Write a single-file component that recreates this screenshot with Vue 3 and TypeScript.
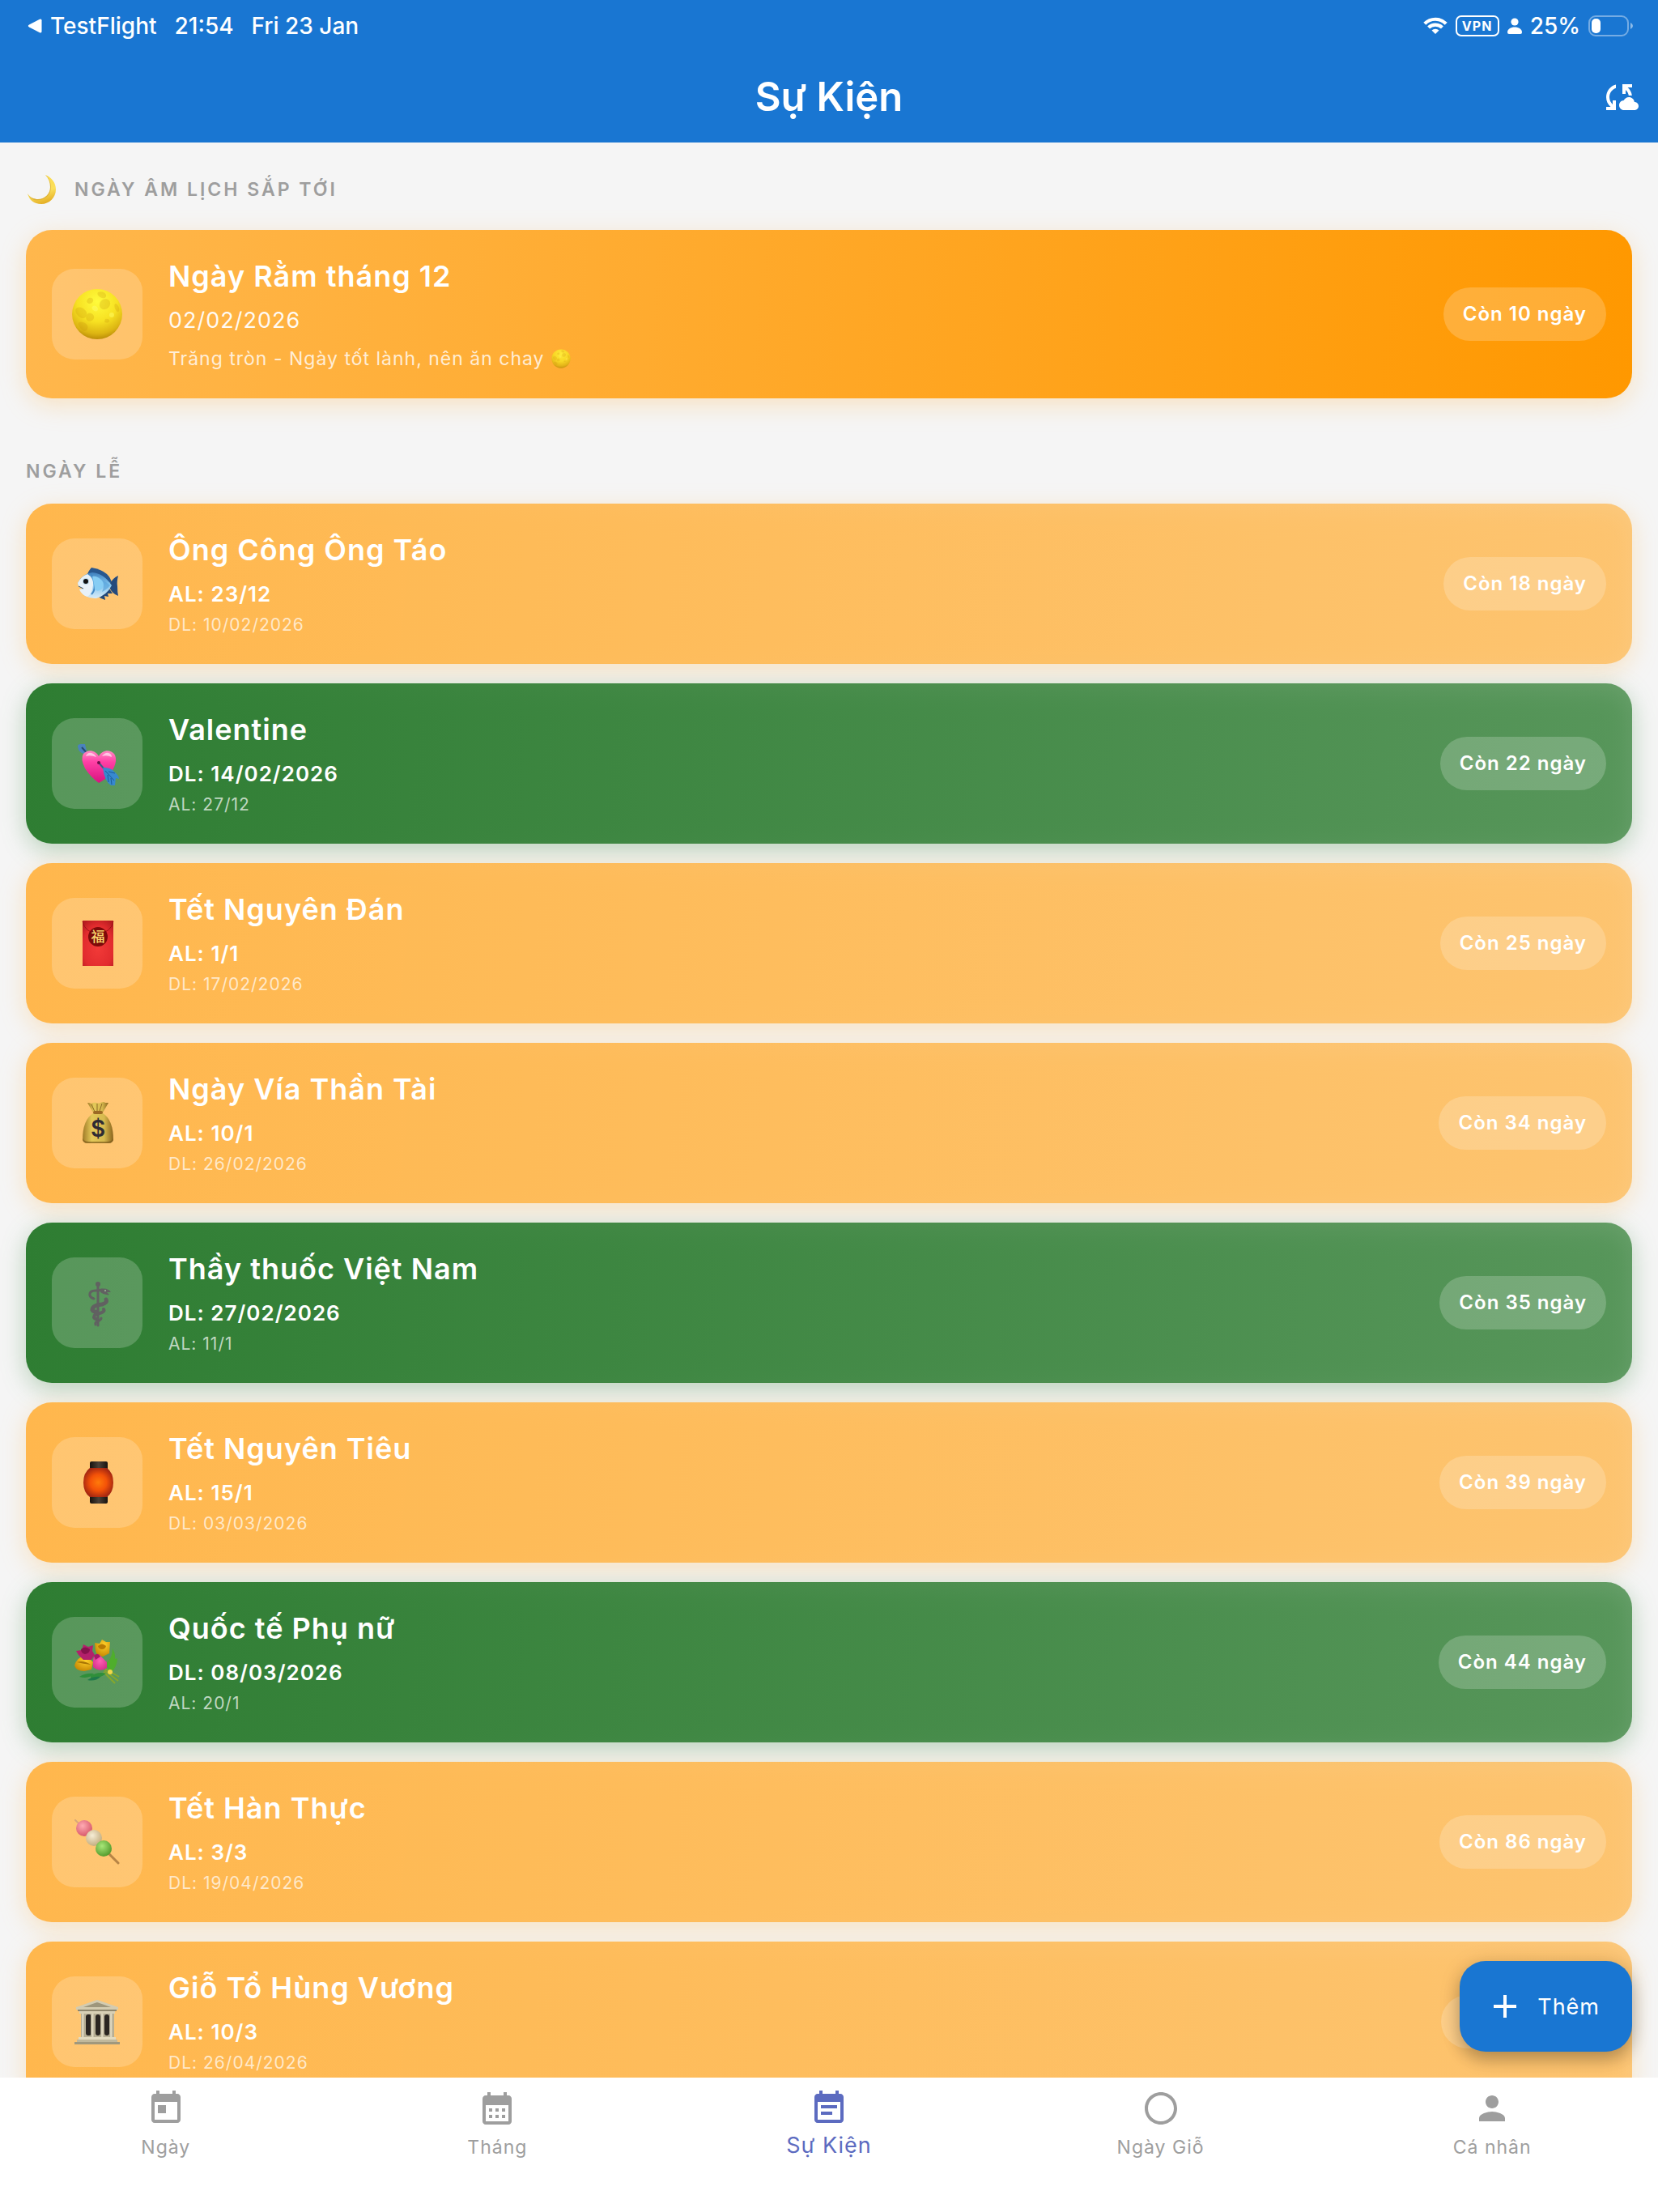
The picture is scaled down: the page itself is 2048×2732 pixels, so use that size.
<script setup lang="ts">
type Tone = 'lunar' | 'solar'

interface Holiday {
  icon: string
  name: string
  primary: string
  secondary: string
  countdown?: string
  tone: Tone
}

interface Tab {
  label: string
  path: string
  active?: boolean
}

const holidays: Holiday[] = [
  { icon: 'fish', name: 'Ông Công Ông Táo', primary: 'AL: 23/12', secondary: 'DL: 10/02/2026', countdown: 'Còn 18 ngày', tone: 'lunar' },
  { icon: 'heart', name: 'Valentine', primary: 'DL: 14/02/2026', secondary: 'AL: 27/12', countdown: 'Còn 22 ngày', tone: 'solar' },
  { icon: 'envelope', name: 'Tết Nguyên Đán', primary: 'AL: 1/1', secondary: 'DL: 17/02/2026', countdown: 'Còn 25 ngày', tone: 'lunar' },
  { icon: 'money', name: 'Ngày Vía Thần Tài', primary: 'AL: 10/1', secondary: 'DL: 26/02/2026', countdown: 'Còn 34 ngày', tone: 'lunar' },
  { icon: 'medical', name: 'Thầy thuốc Việt Nam', primary: 'DL: 27/02/2026', secondary: 'AL: 11/1', countdown: 'Còn 35 ngày', tone: 'solar' },
  { icon: 'lantern', name: 'Tết Nguyên Tiêu', primary: 'AL: 15/1', secondary: 'DL: 03/03/2026', countdown: 'Còn 39 ngày', tone: 'lunar' },
  { icon: 'bouquet', name: 'Quốc tế Phụ nữ', primary: 'DL: 08/03/2026', secondary: 'AL: 20/1', countdown: 'Còn 44 ngày', tone: 'solar' },
  { icon: 'dango', name: 'Tết Hàn Thực', primary: 'AL: 3/3', secondary: 'DL: 19/04/2026', countdown: 'Còn 86 ngày', tone: 'lunar' },
  { icon: 'temple', name: 'Giỗ Tổ Hùng Vương', primary: 'AL: 10/3', secondary: 'DL: 26/04/2026', tone: 'lunar' },
]

const tabs: Tab[] = [
  {
    label: 'Ngày',
    path: 'M19 3h-1V1h-2v2H8V1H6v2H5c-1.11 0-1.99.9-1.99 2L3 19c0 1.1.89 2 2 2h14c1.1 0 2-.9 2-2V5c0-1.1-.9-2-2-2zm0 16H5V8h14v11zM7 10h5v5H7z',
  },
  {
    label: 'Tháng',
    path: 'M19 4h-1V2h-2v2H8V2H6v2H5c-1.11 0-1.99.9-1.99 2L3 20c0 1.1.89 2 2 2h14c1.1 0 2-.9 2-2V6c0-1.1-.9-2-2-2zm0 16H5V10h14v10zM9 14H7v-2h2v2zm4 0h-2v-2h2v2zm4 0h-2v-2h2v2zm-8 4H7v-2h2v2zm4 0h-2v-2h2v2zm4 0h-2v-2h2v2z',
  },
  {
    label: 'Sự Kiện',
    path: 'M17 10H7v2h10v-2zm2-7h-1V1h-2v2H8V1H6v2H5c-1.11 0-1.99.9-1.99 2L3 19c0 1.1.89 2 2 2h14c1.1 0 2-.9 2-2V5c0-1.1-.9-2-2-2zm0 16H5V8h14v11zm-5-5H7v2h7v-2z',
    active: true,
  },
  {
    label: 'Ngày Giỗ',
    path: 'M12 2C6.47 2 2 6.47 2 12s4.47 10 10 10 10-4.47 10-10S17.53 2 12 2zm0 18c-4.42 0-8-3.58-8-8s3.58-8 8-8 8 3.58 8 8-3.58 8-8 8z',
  },
  {
    label: 'Cá nhân',
    path: 'M12 12c2.21 0 4-1.79 4-4s-1.79-4-4-4-4 1.79-4 4 1.79 4 4 4zm0 2c-2.67 0-8 1.34-8 4v2h16v-2c0-2.66-5.33-4-8-4z',
  },
]
</script>

<template>
  <div class="app">
    <!-- Shared paints and the moon disc used in two places -->
    <svg class="defs" aria-hidden="true">
      <defs>
        <radialGradient id="moonFill" cx="0.5" cy="0.25" r="0.8">
          <stop offset="0" stop-color="#fffb3c" />
          <stop offset="0.5" stop-color="#f7e122" />
          <stop offset="0.8" stop-color="#dcb412" />
          <stop offset="1" stop-color="#ad7c04" />
        </radialGradient>
        <symbol id="moon" viewBox="0 0 64 64">
          <circle cx="32" cy="32" r="31" fill="url(#moonFill)" />
          <g fill="#c48f0a" opacity="0.24">
            <path d="M33 5c4-2 9 0 10 3s-2 5-5 4-7-4-5-7z" />
            <path d="M39 14c5-2 10 1 9 6s-7 8-11 5-2-9 2-11z" />
            <path d="M6 25c4-3 9-1 12 3s1 9-4 9-11-8-8-12z" />
            <path d="M21 31c4-1 8 2 7 6s-7 5-9 2 0-7 2-8z" />
            <path d="M55 19c3 1 5 6 4 9s-4 0-5-3-1-6 1-6z" />
            <path d="M10 42c6-1 12 3 10 8s-6 3-9-1-3-6-1-7z" />
            <path d="M22 12c3-1 6 1 5 4s-5 4-7 2 0-5 2-6z" />
            <path d="M42 38c3-1 6 1 5 3s-5 2-6 0z" />
          </g>
          <g fill="#fffc66" opacity="0.5">
            <path d="M27 22c3-1 6 1 6 4s-4 3-6 1-2-4 0-5z" />
            <circle cx="50" cy="33" r="3" />
          </g>
        </symbol>
      </defs>
    </svg>

    <header class="top">
      <div class="status">
        <div class="status-left">
          <svg class="back" viewBox="0 0 18 18" aria-hidden="true"><path d="M2 7.500 15 .8q2.500-1 2.500 1.400v13.600q0 2.400-2.500 1.400L2 10.500q-2.500-1.500 0-3z" fill="#fff" /></svg>
          <span class="origin">TestFlight</span>
          <span class="clock">21:54</span>
          <span>Fri 23 Jan</span>
        </div>
        <div class="status-right">
          <svg class="wifi" viewBox="0 0 30 22" aria-hidden="true">
            <path d="M1.800 8.300a18.500 18.500 0 0 1 26.400 0M6.600 13a12 12 0 0 1 16.800 0" fill="none" stroke="#fff" stroke-width="4.200" />
            <path d="m15 21-4.500-4.400a6.500 6.500 0 0 1 9 0z" fill="#fff" />
          </svg>
          <span class="vpn">VPN</span>
          <svg class="who" viewBox="0 0 18 20" aria-hidden="true"><circle cx="9" cy="5" r="4.600" fill="#fff" /><path d="M0 18c0-4 4-6.500 9-6.500s9 2.500 9 6.500q0 2-2 2H2q-2 0-2-2z" fill="#fff" /></svg>
          <span>25%</span>
          <svg class="battery" viewBox="0 0 56 26" aria-hidden="true">
            <rect x="1" y="1" width="48" height="24" rx="8" fill="none" stroke="#fff" stroke-opacity="0.4" stroke-width="2" />
            <rect x="4" y="4" width="11" height="18" rx="5" fill="#fff" />
            <path d="M52 9q3 1.500 3 4t-3 4z" fill="#fff" fill-opacity="0.5" />
          </svg>
        </div>
      </div>
      <div class="bar">
        <h1>Sự Kiện</h1>
        <button class="sync" type="button" aria-label="Đồng bộ">
          <svg viewBox="0 0 24 24" aria-hidden="true"><path fill="#fff" d="M21.500 14.980c-.02 0-.03 0-.05.01C21.200 13.300 19.760 12 18 12c-1.400 0-2.600.83-3.160 2.020C13.260 14.100 12 15.400 12 17c0 1.660 1.340 3 3 3l6.500-.02c1.380 0 2.500-1.120 2.500-2.500s-1.120-2.500-2.500-2.500zM10 4.260v2.090C7.670 7.180 6 9.390 6 12c0 1.770.78 3.340 2 4.440V14h2v6H4v-2h2.730C5.060 16.540 4 14.400 4 12c0-3.730 2.550-6.850 6-7.740zM20 6h-2.730c1.430 1.260 2.410 3.010 2.660 5h-2.020c-.23-1.360-.93-2.550-1.910-3.440V10h-2V4h6v2z" /></svg>
        </button>
      </div>
    </header>

    <div class="body">
      <main class="scroll">
        <section>
          <h2 class="heading first">
            <svg class="crescent" viewBox="0 0 40 40" aria-hidden="true">
              <defs>
                <linearGradient id="crescentFill" x1="0.3" y1="0" x2="0.6" y2="1">
                  <stop offset="0" stop-color="#f9d94a" />
                  <stop offset="0.6" stop-color="#fbdf5a" />
                  <stop offset="1" stop-color="#e3ac22" />
                </linearGradient>
              </defs>
              <path d="M24 2c8 3 13 10 13 18 0 10-8 18-18 18C10 38 4 33 2 25c3 5 8 7 13 7 9 0 15-7 15-15 0-6-2-11-6-15z" fill="url(#crescentFill)" />
              <path d="M24 2c4 4 6 9 6 15 0 8-6 15-15 15-5 0-10-2-13-7 4 8 9 9 14 8 9-1 15-7 15-16 0-6-3-12-7-15z" fill="#c99a2a" opacity="0.5" />
            </svg>
            <span>NGÀY ÂM LỊCH SẮP TỚI</span>
          </h2>
          <article class="card hero">
            <div class="tile"><svg class="full" aria-hidden="true"><use href="#moon" /></svg></div>
            <div class="info">
              <h3>Ngày Rằm tháng 12</h3>
              <p class="date">02/02/2026</p>
              <p class="note">Trăng tròn - Ngày tốt lành, nên ăn chay <svg class="tiny" aria-hidden="true"><use href="#moon" /></svg></p>
            </div>
            <span class="chip">Còn 10 ngày</span>
          </article>
        </section>

        <section class="holidays">
          <h2 class="heading">NGÀY LỄ</h2>
          <ul class="list">
            <li v-for="item in holidays" :key="item.name" class="card" :class="item.tone">
              <div class="tile">
                <svg v-if="item.icon === 'fish'" viewBox="0 0 56 56" aria-hidden="true">
                  <defs>
                    <linearGradient id="fishBody" x1="0" y1="0" x2="0" y2="1"><stop offset="0" stop-color="#3f7fbd" /><stop offset="0.45" stop-color="#7fc3ee" /><stop offset="1" stop-color="#d9ecf7" /></linearGradient>
                  </defs>
                  <path d="M15 19Q17 12 21 8q12 2 19 8 5 5 6 11L36 26z" fill="#28578f" />
                  <path d="M43 29q4-8 11-11-2 8-1 13 0 7 1 12-8-3-11-11z" fill="#264a7c" />
                  <path d="M26 42q6 4 12 6l-1-5 5 1-1-4 6 0-4-6z" fill="#24497a" />
                  <path d="M4 27Q9 16 22 14q14 1 24 16-6 12-19 16-14 1-21-11l5-1-6-3z" fill="url(#fishBody)" />
                  <path d="M4 27q4-8 12-11 8 5 7 14-1 10-7 14-7-2-10-9l5-1-6-3z" fill="#e8f1f7" />
                  <path d="M20 16q5 5 5 14 0 7-4 11" fill="none" stroke="#4389c6" stroke-width="2" />
                  <path d="M22 19q6-1 12 5 4 5 0 10-5 5-9 1-1-9-3-16z" fill="#86cdf4" />
                  <path d="M34 23q6 3 10 7-5 6-10 8 4-8 0-15z" fill="#5aa4dc" opacity="0.7" />
                  <circle cx="14" cy="25" r="4" fill="#b8d6e8" /><circle cx="14" cy="25" r="3" fill="#111" />
                  <path d="M5 31l6 3" stroke="#36516b" stroke-width="1" />
                </svg>

                <svg v-else-if="item.icon === 'heart'" viewBox="0 0 56 56" aria-hidden="true">
                  <defs>
                    <linearGradient id="heartFill" x1="0" y1="0" x2="0" y2="1"><stop offset="0" stop-color="#ff8ac4" /><stop offset="0.35" stop-color="#ff3fa5" /><stop offset="1" stop-color="#d8127f" /></linearGradient>
                  </defs>
                  <path d="M4 7q0-3 4-3h5l2 8-3 4q-7-1-8-9z" fill="#4a83bd" />
                  <path d="m9 8 9 10" stroke="#274b72" stroke-width="2" />
                  <path d="M30 52Q20 45 13 34 7 22 11 16c5-6 15-5 19 3 4-8 14-9 19-3 4 6 2 14-3 22-5 7-10 11-16 14z" fill="url(#heartFill)" />
                  <path d="M14 19q2-5 7-4 4 1 6 5-7-3-13-1zM34 19q4-5 8-4 4 1 4 5-6-3-12-1z" fill="#fff" opacity="0.6" />
                  <path d="m30 27 18 21" stroke="#3a5f88" stroke-width="2" />
                  <path d="M35 33q10 0 14 5 6 5 6 9l-4-1-1 9-5 0q-8-5-10-22z" fill="#3789cf" />
                  <path d="m38 37 11 12m-8-7 1 9m3-5 1 8m-4-16 8 2" stroke="#1b5a97" stroke-width="1" fill="none" />
                  <circle cx="30" cy="27" r="2" fill="#6b0f47" />
                </svg>

                <svg v-else-if="item.icon === 'envelope'" viewBox="0 0 56 56" aria-hidden="true">
                  <defs>
                    <radialGradient id="paper" cx="0.5" cy="0.6" r="0.7"><stop offset="0" stop-color="#f23a38" /><stop offset="0.7" stop-color="#e22c2e" /><stop offset="1" stop-color="#b81c20" /></radialGradient>
                  </defs>
                  <rect x="10" y="0" width="38" height="56" fill="url(#paper)" />
                  <path d="M10 1q3 14 19 15Q45 15 48 1" fill="none" stroke="#9c1418" stroke-width="1" />
                  <circle cx="29" cy="20" r="12" fill="#7d0a0a" />
                  <text x="29" y="26" text-anchor="middle" font-size="17" font-weight="500" font-family="'Noto Sans CJK SC', sans-serif" fill="#f6d46b">福</text>
                </svg>

                <svg v-else-if="item.icon === 'money'" viewBox="0 0 56 56" aria-hidden="true">
                  <defs>
                    <linearGradient id="sack" x1="0" y1="0" x2="1" y2="0"><stop offset="0" stop-color="#a07a28" /><stop offset="0.3" stop-color="#e3c959" /><stop offset="0.7" stop-color="#d6b94e" /><stop offset="1" stop-color="#8a641d" /></linearGradient>
                  </defs>
                  <path d="M16 3q3 0 5 1 3-2 6-1 3 1 5 0 4-2 6 0l4 0-7 12q-6 3-12 0z" fill="url(#sack)" />
                  <path d="m21 5 4 9m3-10v9m6-9-3 9" stroke="#8d6a25" stroke-width="1" />
                  <path d="M23 16h12q13 8 13 33-2 4-6 4H16q-4 0-6-4 0-25 13-33z" fill="url(#sack)" />
                  <path d="M10 47q2 4 8 4h22q6 0 8-4 0 6-6 6H16q-6 0-6-6z" fill="#7f5b1b" opacity="0.7" />
                  <rect x="23" y="13" width="12" height="4" rx="2" fill="#9b6a24" />
                  <text x="29" y="45" text-anchor="middle" font-size="28" font-weight="600" font-family="Inter, sans-serif" fill="#2f2c33">$</text>
                </svg>

                <svg v-else-if="item.icon === 'medical'" viewBox="0 0 56 60" class="tall" aria-hidden="true">
                  <g fill="none" stroke="#616161" stroke-linecap="round">
                    <path d="M29 8v50" stroke-width="3" />
                    <path d="M34 14Q30 15 26 15q-8 0-7 6 1 3 5 4" stroke-width="3" />
                    <path d="M39 26q2 4-5 6-12 1-12 7 1 2 4 2" stroke-width="5" />
                    <path d="M36 38q2 3-5 5-7 1-7 5 1 2 3 2" stroke-width="4" />
                    <path d="M33 49q0 2-4 4-4 1-3 4" stroke-width="3" />
                  </g>
                  <circle cx="29" cy="7" r="3" fill="#616161" />
                  <path d="M32 13q9-2 13 4l-5 0 3 3q-6 1-11-3z" fill="#616161" />
                  <circle cx="38" cy="15" r="1" fill="#9bbd9d" />
                </svg>

                <svg v-else-if="item.icon === 'lantern'" viewBox="0 0 56 56" aria-hidden="true">
                  <defs>
                    <radialGradient id="glow" cx="0.5" cy="0.5" r="0.55"><stop offset="0" stop-color="#ff7a0a" /><stop offset="0.5" stop-color="#f45208" /><stop offset="1" stop-color="#9f2412" /></radialGradient>
                    <linearGradient id="cap" x1="0" y1="0" x2="1" y2="0"><stop offset="0" stop-color="#17120e" /><stop offset="0.5" stop-color="#4a4138" /><stop offset="1" stop-color="#17120e" /></linearGradient>
                  </defs>
                  <rect x="19" y="2" width="22" height="11" rx="2" fill="url(#cap)" />
                  <rect x="19" y="44" width="22" height="10" rx="2" fill="url(#cap)" />
                  <path d="M19 10h21q8 6 8 18t-8 18H19q-8-6-8-18t8-18z" fill="url(#glow)" />
                </svg>

                <svg v-else-if="item.icon === 'bouquet'" viewBox="0 0 56 56" aria-hidden="true">
                  <defs>
                    <radialGradient id="goldRose" cx="0.6" cy="0.3" r="0.7"><stop offset="0" stop-color="#ffd02a" /><stop offset="1" stop-color="#c98a04" /></radialGradient>
                    <radialGradient id="roseRose" cx="0.5" cy="0.4" r="0.7"><stop offset="0" stop-color="#ff5fb4" /><stop offset="1" stop-color="#cf2b86" /></radialGradient>
                  </defs>
                  <path d="m38 36 17 10M37 38l17 13M36 40l14 14" stroke="#86a82c" stroke-width="2" fill="none" />
                  <path d="M36 31q11-6 11-20 8 14-4 25zM41 37q4-13 12-14 0 11-9 19z" fill="#4fae2c" />
                  <path d="M6 46q8-5 18-4-6 7-18 4zM20 45q9-6 19-3-8 6-19 7z" fill="#2f8f3a" />
                  <path d="M16 50q8-5 16-4-6 6-16 4z" fill="#1e7a4a" />
                  <path d="M25 4l6 1 3-5 5 3 5 0-1 14-8 4q-8-1-9-7z" fill="url(#goldRose)" />
                  <path d="M29 8q5-5 10 0-1 4-5 4-4 0-5-4z" fill="#b97a02" />
                  <path d="M0 32q3-10 11-11 9 3 12 7l-2 9-9 2Q2 39 0 32z" fill="url(#goldRose)" />
                  <path d="M3 28q8-3 17 3-9-1-17-3z" fill="#a97503" />
                  <path d="M2 14l7-1 2-7 6 3 6-2-1 7 3 5-4 6-10 0-6-6z" fill="#b3206b" />
                  <path d="M8 12q5-5 11 0 0 5-6 6-5-1-5-6z" fill="#86124c" />
                  <path d="M23 24q2-6 8-5l9 9 0 7q-8 6-17-1z" fill="url(#roseRose)" />
                  <path d="M24 20q5-5 8 1l-6 4z" fill="#a9186a" />
                  <circle cx="44" cy="40" r="3" fill="#f0d64a" />
                </svg>

                <svg v-else-if="item.icon === 'dango'" viewBox="0 0 56 56" aria-hidden="true">
                  <defs>
                    <radialGradient id="pinkBall" cx="0.4" cy="0.35" r="0.65"><stop offset="0" stop-color="#ffabb3" /><stop offset="1" stop-color="#d85a6c" /></radialGradient>
                    <radialGradient id="creamBall" cx="0.4" cy="0.35" r="0.65"><stop offset="0" stop-color="#f6edd6" /><stop offset="1" stop-color="#c4ae80" /></radialGradient>
                    <radialGradient id="greenBall" cx="0.4" cy="0.35" r="0.65"><stop offset="0" stop-color="#a8e778" /><stop offset="1" stop-color="#559c2e" /></radialGradient>
                  </defs>
                  <path d="m1 1 10 10" stroke="#d9a878" stroke-width="2" stroke-linecap="round" />
                  <path d="m36 36 18 18" stroke="#b78445" stroke-width="3" stroke-linecap="round" />
                  <circle cx="12" cy="11" r="10" fill="url(#pinkBall)" />
                  <circle cx="24" cy="23" r="10" fill="url(#creamBall)" />
                  <circle cx="36" cy="36" r="10" fill="url(#greenBall)" />
                </svg>

                <svg v-else viewBox="0 0 56 56" aria-hidden="true">
                  <defs>
                    <linearGradient id="column" x1="0" y1="0" x2="1" y2="0"><stop offset="0" stop-color="#a39c84" /><stop offset="0.4" stop-color="#e9e2ca" /><stop offset="1" stop-color="#a89f85" /></linearGradient>
                  </defs>
                  <rect x="9" y="18" width="40" height="30" fill="#b9b196" />
                  <g fill="#2b2622">
                    <rect x="14" y="19" width="7" height="26" rx="3" /><rect x="26" y="19" width="6" height="26" rx="3" /><rect x="37" y="19" width="6" height="26" rx="3" />
                  </g>
                  <path d="M28 1 54 10v3H2v-3z" fill="#d3cbb0" />
                  <path d="M28 4 45 10H11z" fill="#9e967c" />
                  <path d="M4 13h48v2H4z" fill="#8f876e" />
                  <rect x="6" y="15" width="44" height="3" fill="#d8d0b5" />
                  <g fill="url(#column)">
                    <rect x="8" y="18" width="5" height="30" /><rect x="20" y="18" width="5" height="30" /><rect x="32" y="18" width="5" height="30" /><rect x="43" y="18" width="5" height="30" />
                  </g>
                  <path d="M5 47h46v3H5z" fill="#e2dac0" /><path d="M3 50h50v3H3z" fill="#c0b89c" /><path d="M0 53h56v3H0z" fill="#a0987d" />
                </svg>
              </div>
              <div class="info">
                <h3>{{ item.name }}</h3>
                <p class="primary">{{ item.primary }}</p>
                <p class="secondary">{{ item.secondary }}</p>
              </div>
              <span class="chip">{{ item.countdown }}</span>
            </li>
          </ul>
        </section>
      </main>

      <button class="fab" type="button">
        <svg viewBox="0 0 24 24" aria-hidden="true"><path d="M19 13h-6v6h-2v-6H5v-2h6V5h2v6h6v2z" fill="#fff" /></svg>
        <span>Thêm</span>
      </button>
    </div>

    <nav class="tabs">
      <a v-for="tab in tabs" :key="tab.label" href="#" class="tab" :class="{ active: tab.active }" :aria-current="tab.active ? 'page' : undefined">
        <svg viewBox="0 0 24 24" aria-hidden="true"><path :d="tab.path" fill="currentColor" /></svg>
        <span>{{ tab.label }}</span>
      </a>
    </nav>
  </div>
</template>

<style>
body {
  margin: 0;
}
</style>

<style scoped>
.app {
  display: flex;
  flex-direction: column;
  height: 100vh;
  background: #f5f5f5;
  color: #fff;
  font-family: Inter, 'Liberation Sans', sans-serif;
}

.defs {
  position: absolute;
  width: 0;
  height: 0;
}

svg {
  display: block;
  flex: none;
}

h1,
h2,
h3,
p,
ul {
  margin: 0;
  padding: 0;
}

button {
  border: 0;
  font-family: inherit;
  color: inherit;
  cursor: pointer;
}

/* Status bar and title */
.top {
  flex: none;
  background: #1976d2;
}

.status {
  display: flex;
  justify-content: space-between;
  align-items: center;
  height: 64px;
  padding: 0 30px 0 34px;
  font-size: 28px;
  font-weight: 500;
}

.status-left,
.status-right {
  display: flex;
  align-items: center;
}

.back {
  width: 18px;
  height: 18px;
  margin-right: 10px;
}

.origin,
.clock {
  margin-right: 22px;
}

.status-right {
  gap: 10px;
}

.wifi {
  width: 30px;
  height: 22px;
}

.vpn {
  box-sizing: border-box;
  width: 54px;
  height: 26px;
  border: 2px solid #fff;
  border-radius: 7px;
  font-size: 16px;
  line-height: 22px;
  font-weight: 700;
  letter-spacing: 1px;
  text-align: center;
}

.who {
  width: 18px;
  height: 20px;
}

.battery {
  width: 56px;
  height: 26px;
}

.bar {
  position: relative;
  display: flex;
  justify-content: center;
  align-items: center;
  height: 112px;
}

h1 {
  font-size: 49px;
  line-height: 56px;
  font-weight: 600;
}

.sync {
  position: absolute;
  right: 24px;
  width: 48px;
  height: 48px;
  padding: 0;
  background: none;
}

/* Content */
.body {
  position: relative;
  flex: 1;
  min-height: 0;
}

.scroll {
  box-sizing: border-box;
  height: 100%;
  padding: 38px 32px 160px;
  overflow-y: auto;
  scrollbar-width: none;
}

.heading {
  display: flex;
  align-items: center;
  gap: 20px;
  margin-bottom: 20px;
  color: #9e9e9e;
  font-size: 23px;
  line-height: 40px;
  font-weight: 600;
  letter-spacing: 3px;
}

.heading.first {
  margin-bottom: 30px;
}

.crescent {
  width: 40px;
  height: 40px;
}

.holidays {
  margin-top: 70px;
}

.list {
  display: flex;
  flex-direction: column;
  gap: 24px;
  list-style: none;
}

.card {
  --from: #ffb74d;
  --to: rgba(255, 183, 77, 0.7);
  --glow: rgba(255, 183, 77, 0.3);
  --angle: 96deg;
  position: relative;
  isolation: isolate;
  display: flex;
  align-items: center;
  gap: 32px;
  padding: 32px;
}

.card::before,
.card::after {
  content: '';
  position: absolute;
  inset: 0;
  border-radius: 32px;
}

/* The tinted shadow lies under the whole card and shows through its translucent end */
.card::before {
  z-index: -2;
  inset: 8px 0 -8px;
  background: var(--glow);
  filter: blur(15px);
}

.card::after {
  z-index: -1;
  background: linear-gradient(var(--angle), var(--from), var(--to));
}

.card.hero {
  --to: #ff9800;
}

.card.solar {
  --from: #2e7d32;
  --to: rgba(46, 125, 50, 0.7);
  --glow: rgba(46, 125, 50, 0.3);
}

.tile {
  display: flex;
  flex: none;
  align-items: center;
  justify-content: center;
  width: 112px;
  height: 112px;
  border-radius: 28px;
  background: rgba(255, 255, 255, 0.2);
}

.tile svg {
  width: 56px;
  height: 56px;
}

.tile .tall {
  height: 60px;
}

.tile .full {
  width: 64px;
  height: 64px;
}

.info {
  flex: 1;
  min-width: 0;
}

h3 {
  font-size: 36px;
  line-height: 50px;
  font-weight: 600;
  letter-spacing: 1px;
}

.primary {
  margin-top: 12px;
  font-size: 26px;
  line-height: 36px;
  font-weight: 600;
  letter-spacing: 1px;
}

.secondary {
  margin-top: 4px;
  font-size: 21px;
  line-height: 32px;
  letter-spacing: 1px;
  color: rgba(255, 255, 255, 0.7);
}

.date {
  margin-top: 10px;
  font-size: 27px;
  line-height: 40px;
  letter-spacing: 1px;
  color: rgba(255, 255, 255, 0.95);
}

.note {
  display: flex;
  align-items: center;
  gap: 8px;
  margin-top: 10px;
  font-size: 23px;
  line-height: 34px;
  letter-spacing: 1px;
  color: rgba(255, 255, 255, 0.8);
}

.tiny {
  width: 24px;
  height: 24px;
  opacity: 0.8;
}

.chip {
  box-sizing: border-box;
  flex: none;
  min-width: 200px;
  height: 66px;
  padding: 0 24px;
  border-radius: 33px;
  background: rgba(255, 255, 255, 0.2);
  font-size: 24px;
  line-height: 66px;
  font-weight: 600;
  letter-spacing: 1px;
}

.chip:empty {
  min-width: 204px;
}

.fab {
  position: absolute;
  right: 32px;
  bottom: 32px;
  display: flex;
  align-items: center;
  gap: 16px;
  height: 112px;
  padding: 0 40px 0 32px;
  border-radius: 32px;
  background: #1976d2;
  box-shadow: 0 10px 20px rgba(0, 0, 0, 0.24), 0 2px 28px rgba(0, 0, 0, 0.1);
  font-size: 27px;
  font-weight: 400;
  letter-spacing: 1px;
}

.fab svg {
  width: 48px;
  height: 48px;
}

/* Bottom navigation */
.tabs {
  box-sizing: border-box;
  display: flex;
  flex: none;
  height: 166px;
  padding-top: 14px;
  background: #fff;
}

.tab {
  display: flex;
  flex: 1;
  flex-direction: column;
  align-items: center;
  gap: 8px;
  color: #9e9e9e;
  font-size: 23px;
  line-height: 32px;
  letter-spacing: 1px;
  text-decoration: none;
}

.tab svg {
  width: 48px;
  height: 48px;
}

.tab.active {
  color: #5c6bc0;
  font-size: 27px;
  line-height: 28px;
}
</style>
